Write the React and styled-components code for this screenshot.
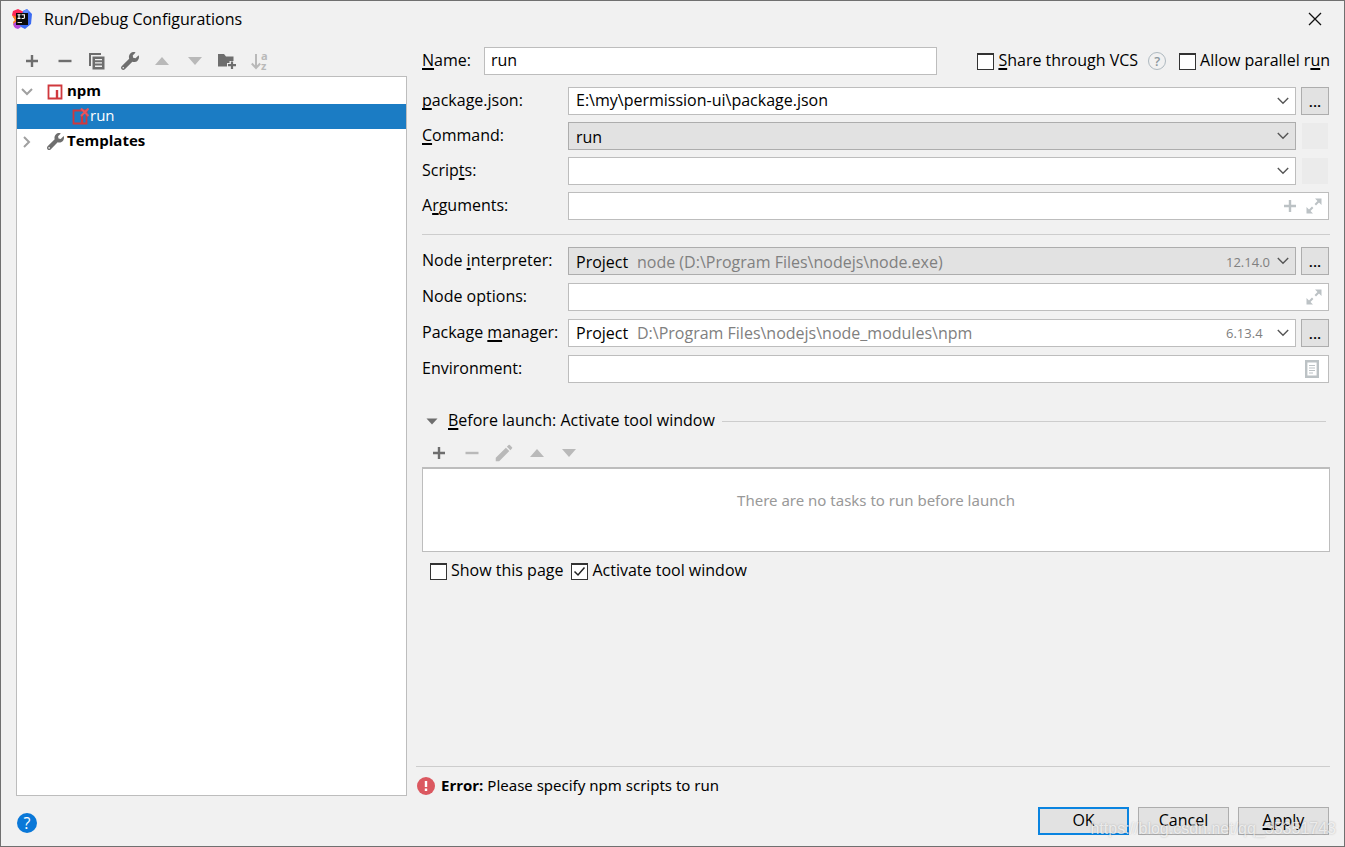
import React, { useState } from "react";
import styled, { createGlobalStyle } from "styled-components";
import { FaWrench } from "react-icons/fa";
import { MdEdit } from "react-icons/md";

function App() {
  const [name, setName] = useState("run");
  const [packageJson, setPackageJson] = useState(
    "E:\\my\\permission-ui\\package.json"
  );

  return (
    <Window>
      <GlobalStyle />
      <TitleBar>
        <AppLogo />
        <Title>Run/Debug Configurations</Title>
        <CloseButton aria-label="Close">
          <svg width="14" height="14" viewBox="0 0 14 14">
            <path d="M1 1L13 13M13 1L1 13" stroke="#111" strokeWidth="1.3" />
          </svg>
        </CloseButton>
      </TitleBar>

      <Body>
        <Sidebar>
          <SideToolbar>
            <ToolButton aria-label="Add">
              <PlusIcon />
            </ToolButton>
            <ToolButton aria-label="Remove">
              <MinusIcon />
            </ToolButton>
            <ToolButton aria-label="Copy">
              <CopyIcon />
            </ToolButton>
            <ToolButton aria-label="Edit templates">
              <FaWrench size={18} />
            </ToolButton>
            <ToolButton aria-label="Move up" $off>
              <UpIcon />
            </ToolButton>
            <ToolButton aria-label="Move down" $off>
              <DownIcon />
            </ToolButton>
            <ToolButton aria-label="New folder">
              <FolderIcon />
            </ToolButton>
            <ToolButton aria-label="Sort" $off>
              <SortIcon />
            </ToolButton>
          </SideToolbar>
          <Tree>
            <TreeRow>
              <Arrow>
                <ChevronDown />
              </Arrow>
              <NpmIcon />
              <TreeText $bold>npm</TreeText>
            </TreeRow>
            <TreeRow $selected $nested>
              <NpmIcon invalid />
              <TreeText>run</TreeText>
            </TreeRow>
            <TreeRow>
              <Arrow>
                <ChevronRight />
              </Arrow>
              <FaWrench size={17} color="#6e6e6e" />
              <TreeText $bold>Templates</TreeText>
            </TreeRow>
          </Tree>
        </Sidebar>

        <Main>
          <Form>
            <NameRow>
              <NameLabel htmlFor="name">
                <u>N</u>ame:
              </NameLabel>
              <NameInput
                id="name"
                value={name}
                onChange={(e) => setName(e.target.value)}
              />
              <CheckItem id="share">
                <u>S</u>hare through VCS
              </CheckItem>
              <HintButton aria-label="About sharing">?</HintButton>
              <CheckItem id="parallel">
                Allow parallel r<u>u</u>n
              </CheckItem>
            </NameRow>

            <Fields $gap={7}>
              <Row>
                <Label htmlFor="package">
                  <u>p</u>ackage.json:
                </Label>
                <Box>
                  <BoxInput
                    id="package"
                    value={packageJson}
                    onChange={(e) => setPackageJson(e.target.value)}
                  />
                  <BoxButton aria-label="Show package.json list">
                    <ComboArrow />
                  </BoxButton>
                </Box>
                <MoreButton aria-label="Browse package.json">...</MoreButton>
              </Row>
              <Row>
                <Label htmlFor="command">
                  <u>C</u>ommand:
                </Label>
                <Combo id="command" value="run" $grey />
                <Blank />
              </Row>
              <Row>
                <Label htmlFor="scripts">
                  Scrip<u>t</u>s:
                </Label>
                <Box>
                  <BoxInput id="scripts" />
                  <BoxButton aria-label="Show scripts">
                    <ComboArrow />
                  </BoxButton>
                </Box>
                <Blank />
              </Row>
              <Row>
                <Label htmlFor="arguments">
                  A<u>r</u>guments:
                </Label>
                <Box>
                  <BoxInput id="arguments" />
                  <BoxButton aria-label="Insert macro">
                    <PlusIcon />
                  </BoxButton>
                  <BoxButton aria-label="Expand arguments">
                    <ExpandIcon />
                  </BoxButton>
                </Box>
              </Row>
            </Fields>

            <Divider />

            <Fields $gap={8}>
              <Row>
                <Label htmlFor="interpreter">
                  Node <u>i</u>nterpreter:
                </Label>
                <Combo
                  id="interpreter"
                  value="Project"
                  detail="node (D:\Program Files\nodejs\node.exe)"
                  version="12.14.0"
                  $grey
                />
                <MoreButton aria-label="Browse interpreter">...</MoreButton>
              </Row>
              <Row>
                <Label htmlFor="options">Node options:</Label>
                <Box>
                  <BoxInput id="options" />
                  <BoxButton aria-label="Expand node options">
                    <ExpandIcon />
                  </BoxButton>
                </Box>
              </Row>
              <Row>
                <Label htmlFor="manager">
                  Package <u>m</u>anager:
                </Label>
                <Combo
                  id="manager"
                  value="Project"
                  detail="D:\Program Files\nodejs\node_modules\npm"
                  version="6.13.4"
                />
                <MoreButton aria-label="Browse package manager">...</MoreButton>
              </Row>
              <Row>
                <Label htmlFor="environment">Environment:</Label>
                <Box>
                  <BoxInput id="environment" />
                  <BoxButton aria-label="Edit environment">
                    <ListIcon />
                  </BoxButton>
                </Box>
              </Row>
            </Fields>

            <SectionTitle>
              <Fold aria-label="Collapse">
                <svg width="12" height="7" viewBox="0 0 12 7">
                  <path d="M0.5 0.5H11.5L6 6.5Z" fill="#6e6e6e" />
                </svg>
              </Fold>
              <Text>
                <u>B</u>efore launch: Activate tool window
              </Text>
              <Line />
            </SectionTitle>
            <TaskToolbar>
              <ToolButton aria-label="Add task">
                <PlusIcon />
              </ToolButton>
              <ToolButton aria-label="Remove task" $off>
                <MinusIcon />
              </ToolButton>
              <ToolButton aria-label="Edit task" $off>
                <MdEdit size={22} />
              </ToolButton>
              <ToolButton aria-label="Move task up" $off>
                <UpIcon />
              </ToolButton>
              <ToolButton aria-label="Move task down" $off>
                <DownIcon />
              </ToolButton>
            </TaskToolbar>
            <TaskList>There are no tasks to run before launch</TaskList>
            <Checks>
              <CheckItem id="show">Show this page</CheckItem>
              <CheckItem id="activate" defaultChecked>
                Activate tool window
              </CheckItem>
            </Checks>
          </Form>

          <Status>
            <svg width="18" height="18" viewBox="0 0 18 18">
              <circle cx="9" cy="9" r="9" fill="#db5860" />
              <path d="M7.8 4H10.2V10H7.8ZM7.8 11.6H10.2V14H7.8Z" fill="#fff" />
            </svg>
            <Text>
              <b>Error:</b> Please specify npm scripts to run
            </Text>
          </Status>
        </Main>
      </Body>

      <Footer>
        <HelpButton aria-label="Help">?</HelpButton>
        <DialogButton $primary>OK</DialogButton>
        <DialogButton>Cancel</DialogButton>
        <DialogButton>
          <u>A</u>pply
        </DialogButton>
        <Watermark>https://blog.csdn.net/qq_35351743</Watermark>
      </Footer>
    </Window>
  );
}

export default App;

function Combo({ id, value, detail, version, $grey }) {
  return (
    <ComboBox $grey={$grey}>
      <Select id={id} defaultValue={value}>
        <option>{value}</option>
      </Select>
      <ComboOverlay>
        <Detail>{detail}</Detail>
        {version && <Version>{version}</Version>}
      </ComboOverlay>
      <ComboChevron>
        <ComboArrow />
      </ComboChevron>
    </ComboBox>
  );
}

function CheckItem({ id, defaultChecked, children }) {
  return (
    <CheckLabel htmlFor={id}>
      <CheckWrap>
        <Check id={id} type="checkbox" defaultChecked={defaultChecked} />
        <svg width="17" height="17" viewBox="0 0 17 17">
          <path
            d="M3.5 8.5L7 12L13.5 4.5"
            fill="none"
            stroke="#222"
            strokeWidth="1.5"
          />
        </svg>
      </CheckWrap>
      <Text>{children}</Text>
    </CheckLabel>
  );
}

/* icons */

const AppLogo = () => (
  <svg width="20" height="20" viewBox="0 0 20 20">
    <path d="M1 2L6 0L12 3L8 10L3 11L0 6Z" fill="#fe2857" />
    <path d="M0 6L5 8L6 17L2 18L1 13L3 11Z" fill="#fc801d" />
    <path d="M11 2L15 0L20 5L19 15L13 20L7 17Z" fill="#3b6bf2" />
    <path d="M1 15L5 12L9 18L6 20L3 19Z" fill="#b44adf" />
    <path d="M11 2L15 0L17 3L13 5Z" fill="#5f8cff" />
    <rect x="4" y="4" width="12" height="12" fill="#0b0b0b" />
    <path
      d="M5.5 5.7H8.5M7 5.7V9.4M5.5 9.4H8.5M9.6 5.7H12.4V8.4Q12.4 9.5 11 9.5H9.6"
      fill="none"
      stroke="#fff"
      strokeWidth="1.1"
    />
    <path d="M5.5 13.5H10" stroke="#ddd" strokeWidth="1" />
  </svg>
);

const PlusIcon = () => (
  <svg width="14" height="14" viewBox="0 0 14 14">
    <path d="M7 1V13M1 7H13" stroke="currentColor" strokeWidth="2.4" />
  </svg>
);

const MinusIcon = () => (
  <svg width="14" height="14" viewBox="0 0 14 14">
    <path d="M0.5 7H13.5" stroke="currentColor" strokeWidth="2.4" />
  </svg>
);

const CopyIcon = () => (
  <svg width="16" height="17" viewBox="0 0 16 17">
    <path d="M0 0H12V2H2V13H0Z" fill="currentColor" />
    <path
      d="M3.5 3.5H15.5V16.5H3.5ZM6 6V7.3H13V6ZM6 9.3V10.6H13V9.3ZM6 12.6V13.9H13V12.6Z"
      fill="currentColor"
      fillRule="evenodd"
    />
  </svg>
);

const UpIcon = () => (
  <svg width="14" height="8" viewBox="0 0 14 8">
    <path d="M0 8H14L7 0Z" fill="currentColor" />
  </svg>
);

const DownIcon = () => (
  <svg width="14" height="8" viewBox="0 0 14 8">
    <path d="M0 0H14L7 8Z" fill="currentColor" />
  </svg>
);

const FolderIcon = () => (
  <svg width="18" height="16" viewBox="0 0 18 16">
    <path
      d="M0 1H6L8 3.5H15.5V8H11.5V10H9V13.5H0Z"
      fill="currentColor"
    />
    <path d="M14 8.5V16M10 12.2H18" stroke="currentColor" strokeWidth="2.2" />
  </svg>
);

const SortIcon = () => (
  <svg width="18" height="28" viewBox="0 -6 18 28">
    <path
      d="M5 1V14M0.8 10.5L5 15L9.2 10.5"
      fill="none"
      stroke="currentColor"
      strokeWidth="2"
    />
    <text x="10" y="7" fontSize="11" fontWeight="700" fill="currentColor">
      a
    </text>
    <text x="10" y="17" fontSize="11" fontWeight="700" fill="currentColor">
      z
    </text>
  </svg>
);

const NpmIcon = ({ invalid }) => (
  <svg width="17" height="17" viewBox="0 0 17 17">
    <path
      d="M1.5 2.5H14.5V15.5H1.5Z"
      fill="none"
      stroke="#d0383d"
      strokeWidth="1.8"
    />
    <path d="M10 7V15" stroke="#d0383d" strokeWidth="2.4" />
    {invalid && (
      <path d="M9 0.5L16.5 8M16.5 0.5L9 8" stroke="#e8545b" strokeWidth="2" />
    )}
  </svg>
);

const ChevronDown = () => (
  <svg width="12" height="8" viewBox="0 0 12 8">
    <path d="M1 1L6 6L11 1" fill="none" stroke="#a0a0a0" strokeWidth="2" />
  </svg>
);

const ChevronRight = () => (
  <svg width="8" height="12" viewBox="0 0 8 12">
    <path d="M1 1L6 6L1 11" fill="none" stroke="#a0a0a0" strokeWidth="2" />
  </svg>
);

const ComboArrow = () => (
  <svg width="12" height="8" viewBox="0 0 12 8">
    <path d="M0.8 1L6 6.2L11.2 1" fill="none" stroke="#555" strokeWidth="1.4" />
  </svg>
);

const ExpandIcon = () => (
  <svg width="16" height="16" viewBox="0 0 16 16">
    <path d="M9 0.5H15.5V7ZM0.5 9V15.5H7Z" fill="currentColor" />
    <path
      d="M13 3L9.3 6.7M3 13L6.7 9.3"
      stroke="currentColor"
      strokeWidth="2"
    />
  </svg>
);

const ListIcon = () => (
  <svg width="20" height="18" viewBox="-3 0 20 18">
    <path
      d="M1.2 1.2H12.8V16.8H1.2Z"
      fill="none"
      stroke="currentColor"
      strokeWidth="2.4"
    />
    <path
      d="M4 5.5H10M4 8H10M4 10.5H10M4 13H8"
      stroke="currentColor"
      strokeWidth="1.1"
    />
  </svg>
);

const GlobalStyle = createGlobalStyle`
  * {
    box-sizing: border-box;
  }

  body {
    margin: 0;
    background: #f1f1f1;
    color: #000;
    font-family: "Open Sans", "Noto Sans", sans-serif;
    font-size: 16px;
    line-height: 20px;
  }

  button, input, select {
    font: inherit;
    color: inherit;
    margin: 0;
    padding: 0;
    border: 0;
    border-radius: 0;
    background: none;
    outline: none;
  }

  svg {
    display: block;
    flex-shrink: 0;
  }

  u {
    text-decoration-thickness: 2px;
    text-underline-offset: 2px;
    text-decoration-skip-ink: none;
  }
`;

const Window = styled.div`
  display: flex;
  flex-direction: column;
  min-height: 100vh;
  border: 1px solid #707070;
  background: #f1f1f1;
`;

const TitleBar = styled.header`
  display: flex;
  align-items: center;
  height: 36px;
  padding: 0 22px 0 11px;
`;

const Title = styled.h1`
  flex: 1;
  margin: 0 0 0 12px;
  font-size: 16px;
  font-weight: 400;
`;

const CloseButton = styled.button`
  display: flex;
`;

const Body = styled.div`
  display: flex;
  flex: 1;
  gap: 9px;
  padding: 1px 14px 0 15px;
`;

const Sidebar = styled.aside`
  display: flex;
  flex-direction: column;
  flex: 0 0 391px;
`;

const Toolbar = styled.div`
  display: flex;
  align-items: center;
  justify-content: space-between;
`;

const SideToolbar = styled(Toolbar)`
  width: 246px;
  height: 30px;
  margin: 8px 0 0 7px;
`;

const TaskToolbar = styled(Toolbar)`
  width: 148px;
  height: 28px;
  margin: 6px 0 0 8px;
`;

const ToolButton = styled.button.attrs({ type: "button" })`
  display: flex;
  align-items: center;
  justify-content: center;
  width: 18px;
  height: 20px;
  color: ${(props) => (props.$off ? "#b9b9b9" : "#6e6e6e")};
`;

const Text = styled.span`
  padding-bottom: 2px;
`;

const Tree = styled.ul`
  flex: 1;
  margin: 0;
  padding: 2px 0;
  list-style: none;
  background: #fff;
  border: 1px solid #bdbdbd;
  font-size: 15px;
`;

const TreeRow = styled.li`
  display: flex;
  align-items: center;
  height: 25px;
  padding-left: ${(props) => (props.$nested ? "55px" : "0")};
  background: ${(props) => (props.$selected ? "#1b7cc4" : "transparent")};
  color: ${(props) => (props.$selected ? "#fff" : "#000")};
`;

const Arrow = styled.span`
  display: flex;
  justify-content: center;
  width: 20px;
  margin-right: 10px;
`;

const TreeText = styled.span`
  margin-left: ${(props) => (props.$bold ? "3px" : "1px")};
  padding-bottom: 4px;
  font-weight: ${(props) => (props.$bold ? 700 : 400)};
`;

const Main = styled.main`
  display: flex;
  flex-direction: column;
  flex: 1;
  min-width: 0;
`;

const Form = styled.form`
  flex: 1;
  padding: 9px 0 0 6px;
`;

const NameRow = styled.div`
  display: flex;
  align-items: center;
  margin-bottom: 12px;
`;

const NameLabel = styled.label`
  width: 62px;
  padding-bottom: 2px;
`;

const field = `
  height: 28px;
  border: 1px solid #bdbdbd;
  background: #fff;
`;

const NameInput = styled.input`
  ${field}
  flex: 1;
  min-width: 0;
  margin-right: 40px;
  padding: 0 6px 2px;
  background: #fff;
  border: 1px solid #bdbdbd;
`;

const CheckLabel = styled.label`
  display: flex;
  align-items: center;
  gap: 4px;
  white-space: nowrap;
`;

const CheckWrap = styled.span`
  display: grid;

  > * {
    grid-area: 1 / 1;
  }

  svg {
    visibility: hidden;
    pointer-events: none;
  }

  input:checked + svg {
    visibility: visible;
  }
`;

const Check = styled.input`
  appearance: none;
  width: 17px;
  height: 17px;
  background: #fff;
  border: 2px solid #333;
  border-width: 2px 1px 1px 1px;
`;

const HintButton = styled.button.attrs({ type: "button" })`
  width: 18px;
  height: 18px;
  margin: 0 13px 0 10px;
  border: 1px solid #aeb9c0;
  border-radius: 50%;
  color: #8b979e;
  font-size: 13px;
  font-weight: 600;
  line-height: 16px;
`;

const Fields = styled.div`
  display: flex;
  flex-direction: column;
  gap: ${(props) => props.$gap}px;
  padding-right: 1px;
`;

const Row = styled.div`
  display: flex;
  align-items: center;
  gap: 5px;
`;

const Label = styled.label`
  flex: 0 0 141px;
  padding-bottom: 2px;
  white-space: nowrap;
`;

const Box = styled.div`
  ${field}
  display: flex;
  flex: 1;
  align-items: center;
  gap: 9px;
  min-width: 0;
  padding: 0 6px 0 7px;
`;

const BoxInput = styled.input`
  flex: 1;
  min-width: 0;
  height: 26px;
  padding-bottom: 2px;
`;

const BoxButton = styled.button.attrs({ type: "button" })`
  display: flex;
  color: #bcc2c5;
`;

const ComboBox = styled.div`
  ${field}
  display: grid;
  flex: 1;
  min-width: 0;
  background: ${(props) => (props.$grey ? "#e2e2e2" : "#fff")};
  border-color: ${(props) => (props.$grey ? "#adadad" : "#bdbdbd")};
  line-height: ${(props) => (props.$grey ? "28px" : "26px")};

  > * {
    grid-area: 1 / 1;
    min-width: 0;
  }
`;

const Select = styled.select`
  appearance: none;
  height: 26px;
  padding-left: 7px;
  line-height: inherit;
`;

const ComboOverlay = styled.span`
  display: flex;
  justify-content: space-between;
  height: 26px;
  padding: 0 23px 0 68px;
  color: #808080;
  pointer-events: none;
`;

const Detail = styled.span`
  overflow: hidden;
  white-space: nowrap;
`;

const Version = styled.span`
  width: 46px;
  font-size: 13px;
`;

const ComboChevron = styled.span`
  justify-self: end;
  align-self: center;
  margin-right: 6px;
  pointer-events: none;
`;

const MoreButton = styled.button.attrs({ type: "button" })`
  width: 28px;
  height: 28px;
  background: #e2e2e2;
  border: 1px solid #adadad;
  font-size: 15px;
  font-weight: 600;
`;

const Blank = styled.span`
  width: 26px;
  height: 26px;
  margin: 0 1px;
  background: #ebebeb;
`;

const Divider = styled.hr`
  margin: 14px 0 12px;
  border: 0;
  border-top: 1px solid #cdcdcd;
`;

const SectionTitle = styled.div`
  display: flex;
  align-items: center;
  height: 24px;
  margin-top: 26px;
  padding: 0 4px;
`;

const Fold = styled.button.attrs({ type: "button" })`
  display: flex;
  margin-right: 10px;
`;

const Line = styled.span`
  flex: 1;
  height: 1px;
  margin-left: 7px;
  background: #cdcdcd;
`;

const TaskList = styled.div`
  height: 85px;
  padding-top: 21px;
  background: #fff;
  border: 1px solid #bdbdbd;
  border-top-width: 2px;
  color: #999;
  font-family: "Noto Sans", sans-serif;
  font-size: 15px;
  text-align: center;
`;

const Checks = styled.div`
  display: flex;
  gap: 8px;
  padding: 8px;
`;

const Status = styled.div`
  display: flex;
  align-items: center;
  gap: 6px;
  height: 30px;
  padding: 8px 0 0 1px;
  border-top: 1px solid #cdcdcd;
  font-family: "Noto Sans", sans-serif;
  font-size: 15px;

  b {
    font-family: "Open Sans", sans-serif;
  }
`;

const Footer = styled.footer`
  position: relative;
  display: flex;
  align-items: center;
  gap: 9px;
  height: 50px;
  padding: 0 15px 0 16px;
`;

const HelpButton = styled.button`
  width: 20px;
  height: 20px;
  margin: 4px auto 0 0;
  background: #0a78d8;
  border-radius: 50%;
  color: #fff;
`;

const DialogButton = styled.button`
  width: 91px;
  height: 28px;
  padding-bottom: 2px;
  background: #e2e2e2;
  border: ${(props) =>
    props.$primary ? "2px solid #0a84e0" : "1px solid #adadad"};
`;

const Watermark = styled.span`
  position: absolute;
  right: 8px;
  bottom: 7px;
  color: rgba(255, 255, 255, 0.7);
  font-family: "Liberation Sans", sans-serif;
  font-size: 16px;
  text-shadow: 0 0 2px rgba(0, 0, 0, 0.25);
  pointer-events: none;
`;
